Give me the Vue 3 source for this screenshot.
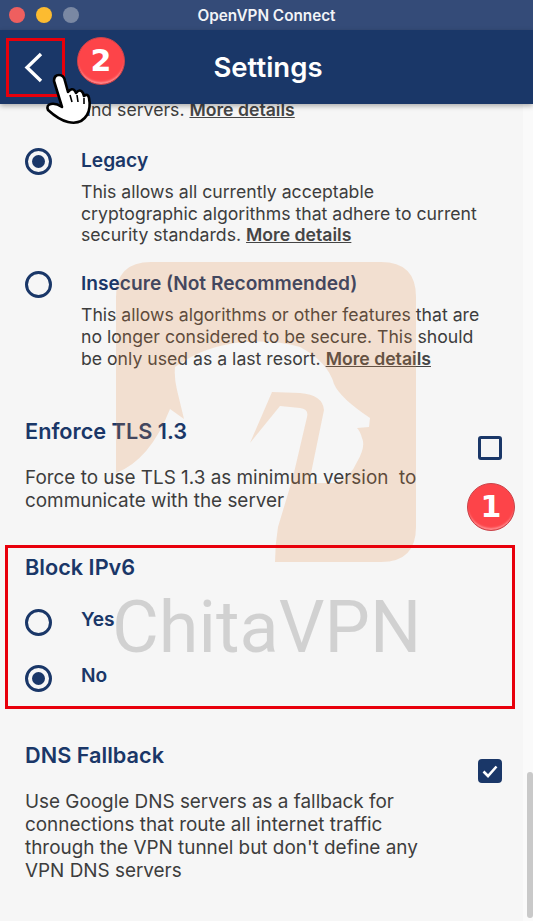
<script setup>
const legacyOptions = [
  {
    label: 'Legacy',
    checked: true,
    lines: ['This allows all currently acceptable', 'cryptographic algorithms that adhere to current', 'security standards.']
  },
  {
    label: 'Insecure (Not Recommended)',
    checked: false,
    lines: ['This allows algorithms or other features that are', 'no longer considered to be secure. This should', 'be only used as a last resort.']
  }
]
</script>

<template>
  <div class="window">
    <div class="titlebar">
      <span class="light red"></span>
      <span class="light yellow"></span>
      <span class="light gray"></span>
      <span class="title">OpenVPN Connect</span>
    </div>
    <header class="header">
      <svg class="back" width="24" height="34" viewBox="0 0 24 34">
        <path d="M21 4 L7 17.5 L21 31" fill="none" stroke="#fff" stroke-width="3.4" />
      </svg>
      <h1>Settings</h1>
    </header>

    <div class="body">
      <main class="content">
        <p class="cut-line">and servers. <a>More details</a></p>

        <div v-for="opt in legacyOptions" :key="opt.label" class="option">
          <span :class="['radio', { on: opt.checked }]"></span>
          <div>
            <div class="option-label">{{ opt.label }}</div>
            <p class="option-text">
              <template v-for="(line, i) in opt.lines" :key="i">
                {{ line }}<br v-if="i < opt.lines.length - 1" />
              </template>
              <a>More details</a>
            </p>
          </div>
        </div>

        <section class="setting tls">
          <div class="setting-main">
            <h2>Enforce TLS 1.3</h2>
            <p>Force to use TLS 1.3 as minimum version&nbsp; to<br />communicate with the server</p>
          </div>
          <span class="check"></span>
        </section>

        <section class="block-ipv6">
          <h2>Block IPv6</h2>
          <div class="choice">
            <span class="radio"></span>
            <span class="choice-label">Yes</span>
          </div>
          <div class="choice">
            <span class="radio on"></span>
            <span class="choice-label">No</span>
          </div>
        </section>

        <section class="setting dns">
          <div class="setting-main">
            <h2>DNS Fallback</h2>
            <p>Use Google DNS servers as a fallback for<br />connections that route all internet traffic<br />through the VPN tunnel but don't define any<br />VPN DNS servers</p>
          </div>
          <span class="check on">
            <svg width="18" height="18" viewBox="0 0 18 18">
              <path d="M2.5 9.5 L7 14 L15.5 4.5" fill="none" stroke="#fff" stroke-width="2.6" />
            </svg>
          </span>
        </section>
      </main>
      <div class="scroll-track"><div class="scroll-thumb"></div></div>
    </div>

    <!-- watermark -->
    <svg class="logo" width="300" height="300" viewBox="116 262 300 300">
      <path
        fill="#e8893a"
        fill-opacity="0.2"
        d="M151 262 H381 Q416 262 416 297 V527 Q416 562 381 562 H275 Q275 545 278 527 L293 477 L307 417 Q309 409 300 408 L280 406 L250 443 L272 392 L300 393 Q323 395 324 410 L309 483 H337 Q350 478 357 462 Q366 447 362 438 Q360 431 357 428 L369 427 L370 418 Q340 398 334 384 Q328 362 300 347 Q275 340 245 342 Q205 345 175 367 Q174 378 177 390 L184 419 L170 409 Q150 460 116 473 V297 Q116 262 151 262 Z"
      />
    </svg>
    <div class="wordmark">ChitaVPN</div>

    <!-- tutorial marks -->
    <div class="mark-box back-box"></div>
    <div class="mark-box ipv6-box"></div>
    <div class="badge badge-two">2</div>
    <div class="badge badge-one">1</div>
    <svg class="hand" width="52" height="58" viewBox="44 72 52 58">
      <path
        d="M54 81 Q54 75 59 75 Q64 75 65 81 L68 92 Q72 87 75 91 L76 93 Q80 88 83 93 L84 96 Q88 93 89 98 Q91 108 87 115 Q81 125 68 122 Q59 120 48 110 Q46 105 51 104 Q56 103 62 107 Z"
        fill="#fff"
        stroke="#000"
        stroke-width="2.6"
        stroke-linejoin="round"
      />
      <path d="M70 95 L72 102 M77 95 L78 102 M84 98 L84 104" fill="none" stroke="#000" stroke-width="1.6" />
    </svg>
  </div>
</template>

<style scoped>
.window {
  position: relative;
  width: 533px;
  height: 921px;
  overflow: hidden;
  display: flex;
  flex-direction: column;
  background: #fafafa;
  font-family: Inter, "Liberation Sans", sans-serif;
  color: #3d3d3d;
}

.titlebar {
  position: relative;
  height: 30px;
  flex: none;
  display: flex;
  align-items: center;
  gap: 11px;
  padding-left: 9px;
  box-sizing: border-box;
  background: #344b78;
}

.light {
  width: 16px;
  height: 16px;
  border-radius: 50%;
}
.light.red { background: #ee5f5f; }
.light.yellow { background: #fcbb30; }
.light.gray { background: #7a88a3; }

.title {
  position: absolute;
  left: 0;
  right: 0;
  text-align: center;
  font-size: 15.3px;
  font-weight: 600;
  color: #f2f4f7;
}

.header {
  position: relative;
  z-index: 2;
  height: 74px;
  flex: none;
  display: flex;
  align-items: center;
  justify-content: center;
  background: #1a3768;
  box-shadow: 0 2px 5px rgba(0, 0, 0, 0.3);
}

.header h1 {
  margin: 0 0 0 3px;
  font-size: 27.5px;
  font-weight: 600;
  color: #fff;
}

.back {
  position: absolute;
  left: 20px;
  top: 20px;
}

.body {
  flex: 1;
  min-height: 0;
  display: flex;
}

.content {
  width: 523px;
  flex: none;
  background: #f6f6f6;
  overflow: hidden;
}

p {
  margin: 0;
}

a {
  margin-left: 5px;
  font-weight: 600;
  text-decoration: underline;
  color: #454545;
}

.cut-line {
  margin-top: -6px;
  padding-left: 81px;
  font-size: 17.65px;
  line-height: 23px;
}

.cut-line a {
  margin-left: 0;
}

.option {
  display: flex;
  align-items: flex-start;
  gap: 28px;
  padding-left: 25px;
}

.cut-line + .option {
  margin-top: 27px;
}

.option + .option {
  margin-top: 25px;
}

.option-label {
  padding-top: 1px;
  font-size: 19.15px;
  font-weight: 600;
  line-height: 22px;
  color: #1a3768;
}

.option-text {
  margin-top: 10px;
  font-size: 17.65px;
  line-height: 21.7px;
}

.radio {
  position: relative;
  flex: none;
  width: 27px;
  height: 27px;
  margin-right: 1px;
  box-sizing: border-box;
  border: 3px solid #1a3768;
  border-radius: 50%;
}

.radio.on::after {
  content: "";
  position: absolute;
  left: 4px;
  top: 4px;
  width: 13px;
  height: 13px;
  border-radius: 50%;
  background: #1a3768;
}

h2 {
  margin: 0;
  font-size: 21.7px;
  font-weight: 600;
  line-height: 26px;
  color: #1a3768;
}

.setting {
  position: relative;
  display: flex;
  padding-left: 25px;
}

.setting-main {
  width: 425px;
}

.setting p {
  margin-top: 22px;
  font-size: 18.9px;
  line-height: 23px;
}

.tls {
  margin-top: 49px;
}

.dns {
  margin-top: 49px;
}

.check {
  flex: none;
  width: 24px;
  height: 24px;
  margin: 18px 0 0 28px;
  box-sizing: border-box;
  border: 3px solid #1a3768;
  border-radius: 3px;
}

.check.on {
  display: flex;
  align-items: center;
  justify-content: center;
  margin-top: 17px;
  background: #1a3768;
  border-radius: 4px;
}

.block-ipv6 {
  margin-top: 42px;
  padding-left: 25px;
}

.choice {
  display: flex;
  align-items: flex-start;
  gap: 28px;
  margin-top: 28px;
  height: 28px;
}

.block-ipv6 h2 + .choice {
  margin-top: 29px;
}

.choice-label {
  margin-top: -1px;
  font-size: 19.15px;
  font-weight: 600;
  line-height: 22px;
  color: #1a3768;
}

.scroll-track {
  flex: 1;
  position: relative;
}

.scroll-thumb {
  position: absolute;
  left: 4px;
  right: 0;
  top: 668px;
  height: 146px;
  border-radius: 3px;
  background: #c9c9c9;
}

.logo {
  position: absolute;
  left: 116px;
  top: 262px;
  pointer-events: none;
}

.wordmark {
  position: absolute;
  left: 112px;
  top: 584px;
  font-family: Roboto, sans-serif;
  font-size: 72px;
  line-height: 88px;
  color: rgba(0, 0, 0, 0.15);
  pointer-events: none;
}

.mark-box {
  position: absolute;
  box-sizing: border-box;
  border: 3px solid #e8000b;
  pointer-events: none;
}

.back-box {
  left: 6px;
  top: 38px;
  width: 59px;
  height: 59px;
  z-index: 3;
}

.ipv6-box {
  left: 5px;
  top: 545px;
  width: 510px;
  height: 164px;
}

.badge {
  position: absolute;
  z-index: 3;
  width: 48px;
  height: 48px;
  box-sizing: border-box;
  border: 1px solid #c9444a;
  border-radius: 50%;
  background: #fd4449;
  box-shadow: inset 0 -3px 2px -1px #ff8a8d;
  color: #fff;
  font-family: "DejaVu Sans", sans-serif;
  font-size: 30px;
  font-weight: 700;
  line-height: 45px;
  text-align: center;
}

.badge-two {
  left: 77px;
  top: 37px;
}

.badge-one {
  left: 467px;
  top: 483px;
}

.hand {
  position: absolute;
  z-index: 4;
  left: 44px;
  top: 72px;
}
</style>
